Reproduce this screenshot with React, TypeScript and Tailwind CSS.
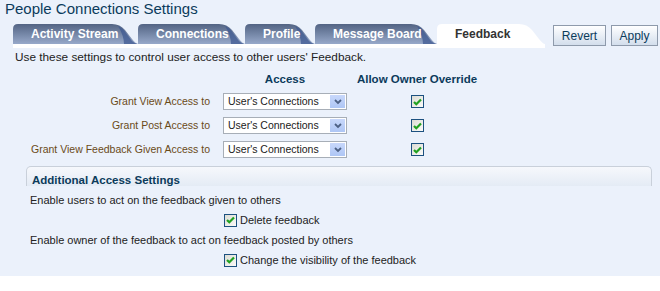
import React from 'react';

const tabs = [
  { label: 'Activity Stream', width: 125 },
  { label: 'Connections', width: 107 },
  { label: 'Profile', width: 70 },
  { label: 'Message Board', width: 122 },
  { label: 'Feedback', width: 108, active: true },
];

const Tab: React.FC<{ label: string; width: number; active?: boolean }> = ({ label, width, active }) => {
  const w = width;
  const id = `tabgrad-${label.replace(/\s/g, '')}`;
  return (
    <div className="relative h-[20px] shrink-0" style={{ width: w }}>
      <svg className="absolute inset-0" width={w} height={20} viewBox={`0 0 ${w} 20`}>
        <defs>
          <linearGradient id={id} x1="0" y1="0" x2="0" y2="1">
            <stop offset="0" stopColor={active ? '#ffffff' : '#536484'} />
            <stop offset="1" stopColor={active ? '#ffffff' : '#97a9ca'} />
          </linearGradient>
        </defs>
        <path
          d={`M0,20 L0,5 Q0,0 5,0 L${w - 26},0 Q${w - 18},0 ${w - 13},6 L${w - 6},15 Q${w - 2},20 ${w},20 Z`}
          fill={`url(#${id})`}
        />
        {!active && (
          <path
            d={`M${w - 20},2 Q${w - 15},4 ${w - 12},9 L${w - 6},17 Q${w - 3},20 ${w},20 L${w - 14},20 Q${w - 14},12 ${w - 20},2 Z`}
            fill="#3f5a92"
            opacity="0.75"
          />
        )}
      </svg>
      <span
        className={`relative block pl-[18px] pt-[3px] text-[12px] font-bold leading-[14px] ${
          active ? 'text-[#333333] pl-[17px]' : 'text-white'
        }`}
      >
        {label}
      </span>
    </div>
  );
};

const Check: React.FC = () => (
  <span className="inline-flex h-[13px] w-[13px] shrink-0 items-center justify-center border border-[#1c5180] bg-gradient-to-br from-[#dcdcd4] to-[#fbfbf9]">
    <svg width="9" height="8" viewBox="0 0 9 8">
      <path d="M1,4 L3.3,6.3 L8,1.5" fill="none" stroke="#21a121" strokeWidth="2.2" />
    </svg>
  </span>
);

const Select: React.FC = () => (
  <div className="flex h-[17px] w-[124px] items-center justify-between border border-[#a7aeb7] bg-white pl-[4px] pr-[1px]">
    <span className="text-[10.5px] leading-[13px] text-[#1a1a1a]">User's Connections</span>
    <span className="flex h-[13px] w-[15px] items-center justify-center bg-gradient-to-b from-[#c8d8fb] to-[#aec6f5]">
      <svg width="8" height="6" viewBox="0 0 8 6">
        <path d="M1,1 L4,4 L7,1" fill="none" stroke="#4d6185" strokeWidth="1.8" />
      </svg>
    </span>
  </div>
);

const rows = ['Grant View Access to', 'Grant Post Access to', 'Grant View Feedback Given Access to'];

export default function App() {
  return (
    <div className="w-[660px] h-[291px] bg-white font-['Liberation_Sans',Arial,sans-serif]">
      <div className="h-[276px] bg-[#ebf1fb]">
        <h1 className="pl-[5px] h-[24px] text-[15px] leading-[17px] text-[#0b3b5b]">People Connections Settings</h1>
        <div className="flex items-start">
          <div className="pl-[13px]">
            <div className="flex">
              {tabs.map((t) => (
                <Tab key={t.label} {...t} />
              ))}
            </div>
            <div className="h-[4px] bg-white" />
          </div>
          <div className="ml-[8px] mt-[1px] flex gap-[5px]">
            <button className="h-[21px] w-[53px] border border-[#8e9aab] bg-gradient-to-b from-[#ffffff] to-[#d3deec] text-[12px] text-[#0b3b5b]">
              Revert
            </button>
            <button className="h-[21px] w-[47px] border border-[#8e9aab] bg-gradient-to-b from-[#ffffff] to-[#d3deec] text-[12px] text-[#0b3b5b]">
              Apply
            </button>
          </div>
        </div>
        <p className="pl-[15px] pt-[2px] text-[11.8px] leading-[14px] text-[#222222]">
          Use these settings to control user access to other users' Feedback.
        </p>
        <div className="mt-[8px] grid grid-cols-[210px_124px_120px] gap-x-[13px] gap-y-[7px] items-center">
          <div />
          <div className="text-center text-[11.5px] font-bold leading-[14px] text-[#0b3b5b]">Access</div>
          <div className="-ml-[6px] text-center text-[11.5px] font-bold leading-[14px] text-[#0b3b5b]">Allow Owner Override</div>
          {rows.map((r) => (
            <React.Fragment key={r}>
              <div className="text-right text-[10.5px] leading-[17px] text-[#6a4a18]">{r}</div>
              <Select />
              <div className="-ml-[6px] flex justify-center">
                <Check />
              </div>
            </React.Fragment>
          ))}
        </div>
        <div className="mr-[8px] ml-[26px] mt-[8px] h-[20px] rounded-t-[5px] border border-b-0 border-[#c9d0da] bg-gradient-to-b from-[#f6f8fc] to-[#e4ebf5] pl-[5px]">
          <span className="text-[11.5px] font-bold leading-[20px] text-[#0b3b5b]">Additional Access Settings</span>
        </div>
        <div className="pl-[30px] pt-[7px] text-[11px] leading-[14px] text-[#222222]">
          <p>Enable users to act on the feedback given to others</p>
          <label className="ml-[194px] mt-[6px] flex items-center gap-[3px]">
            <Check />
            <span>Delete feedback</span>
          </label>
          <p className="mt-[6px]">Enable owner of the feedback to act on feedback posted by others</p>
          <label className="ml-[194px] mt-[6px] flex items-center gap-[3px]">
            <Check />
            <span>Change the visibility of the feedback</span>
          </label>
        </div>
      </div>
    </div>
  );
}
